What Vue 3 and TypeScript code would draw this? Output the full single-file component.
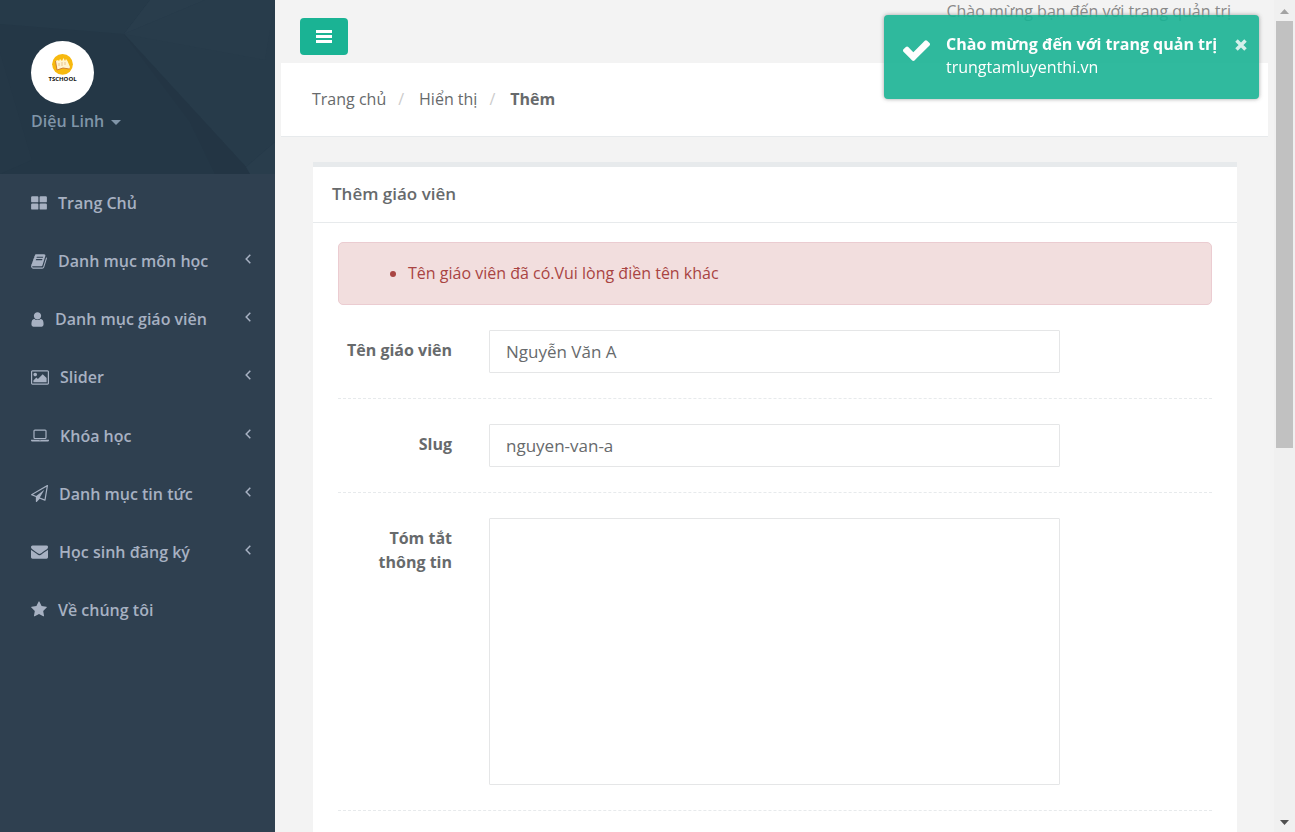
<script setup lang="ts">
import { ref } from 'vue'

interface MenuItem {
  label: string
  viewBox: string
  width: number
  path: string
  expandable: boolean
}

const menu: MenuItem[] = [
  {
    label: 'Trang Chủ',
    viewBox: '0 0 1664 1792',
    width: 16,
    expandable: false,
    path: 'M128 128h544q96 0 96 96v448q0 96-96 96h-544q-128 0-128-96v-448q0-96 128-96zM992 128h544q128 0 128 96v448q0 96-128 96h-544q-96 0-96-96v-448q0-96 96-96zM128 896h544q96 0 96 96v448q0 96-96 96h-544q-128 0-128-96v-448q0-96 128-96zM992 896h544q128 0 128 96v448q0 96-128 96h-544q-96 0-96-96v-448q0-96 96-96z',
  },
  {
    label: 'Danh mục môn học',
    viewBox: '64 0 1664 1792',
    width: 16,
    expandable: true,
    path: 'M1703 478q40 57 18 129l-275 906q-19 64-76.5 107.5t-122.5 43.5h-923q-77 0-148.5-53.5t-99.5-131.5q-24-67-2-127 0-4 3-27t4-37q1-8-3-21.5t-3-19.5q2-11 8-21t16.5-23.5 16.5-23.5q23-38 45-91.5t30-91.5q3-10 .5-30t-.5-28q3-11 17-28t17-23q21-36 42-92t25-90q1-9-2.5-32t.5-28q4-13 22-30.5t22-22.5q19-26 42.5-84.5t27.5-96.5q1-8-3-25.5t-2-26.5q2-8 9-18t18-23 17-21q8-12 16.5-30.5t15-35 16-36 19.5-32 26.5-23.5 36-11.5 47.5 5.5l-1 3q38-9 51-9h761q74 0 114 56t18 130l-274 906q-36 119-71.5 153.5t-128.5 34.5h-869q-27 0-38 15-11 16-1 43 24 70 144 70h923q29 0 56-15.5t35-41.5l300-987q7-22 5-57 38 15 59 43zm-1064 2q-4 13 2 22.5t20 9.5h608q13 0 25.5-9.5t16.5-22.5l21-64q4-13-2-22.5t-20-9.5h-608q-13 0-25.5 9.5t-16.5 22.5zm-83 256q-4 13 2 22.5t20 9.5h608q13 0 25.5-9.5t16.5-22.5l21-64q4-13-2-22.5t-20-9.5h-608q-13 0-25.5 9.5t-16.5 22.5z',
  },
  {
    label: 'Danh mục giáo viên',
    viewBox: '256 0 1280 1792',
    width: 13,
    expandable: true,
    path: 'M1536 1399q0 109-62.5 187t-150.5 78h-854q-88 0-150.5-78t-62.5-187q0-85 8.5-160.5t31.5-152 58.5-131 94-89 134.5-34.5q131 128 313 128t313-128q76 0 134.5 34.5t94 89 58.5 131 31.5 152 8.5 160.5zm-256-887q0 159-112.5 271.5t-271.5 112.5-271.5-112.5-112.5-271.5 112.5-271.5 271.5-112.5 271.5 112.5 112.5 271.5z',
  },
  {
    label: 'Slider',
    viewBox: '-64 0 1920 1792',
    width: 18,
    expandable: true,
    path: 'M576 576q0 80-56 136t-136 56-136-56-56-136 56-136 136-56 136 56 56 136zm1024 384v448h-1408v-192l320-320 160 160 512-512zm96-704h-1600q-13 0-22.5 9.5t-9.5 22.5v1216q0 13 9.5 22.5t22.5 9.5h1600q13 0 22.5-9.5t9.5-22.5v-1216q0-13-9.5-22.5t-22.5-9.5zm160 32v1216q0 66-47 113t-113 47h-1600q-66 0-113-47t-47-113v-1216q0-66 47-113t113-47h1600q66 0 113 47t47 113z',
  },
  {
    label: 'Khóa học',
    viewBox: '0 0 1920 1792',
    width: 18,
    expandable: true,
    path: 'M416 1280q-66 0-113-47t-47-113v-704q0-66 47-113t113-47h1088q66 0 113 47t47 113v704q0 66-47 113t-113 47h-1088zm-32-864v704q0 13 9.5 22.5t22.5 9.5h1088q13 0 22.5-9.5t9.5-22.5v-704q0-13-9.5-22.5t-22.5-9.5h-1088q-13 0-22.5 9.5t-9.5 22.5zm1376 928h160v96q0 40-47 68t-113 28h-1600q-66 0-113-28t-47-68v-96h1760zm-720 96q16 0 16-16t-16-16h-160q-16 0-16 16t16 16h160z',
  },
  {
    label: 'Danh mục tin tức',
    viewBox: '0 0 1792 1792',
    width: 17,
    expandable: true,
    path: 'M1764 11q33 24 27 64l-256 1536q-5 29-32 45-14 8-31 8-11 0-24-5l-527-215-298 327q-18 21-47 21-14 0-23-4-19-7-30-23.5t-11-36.5v-452l-472-193q-37-14-40-55-3-39 32-59l1664-960q35-21 68 2zm-342 1499l221-1323-1434 827 336 137 863-639-478 797z',
  },
  {
    label: 'Học sinh đăng ký',
    viewBox: '0 0 1792 1792',
    width: 17,
    expandable: true,
    path: 'M1792 710v794q0 66-47 113t-113 47h-1472q-66 0-113-47t-47-113v-794q44 49 101 87 362 246 497 345 57 42 92.5 65.5t94.5 48 110 24.5h2q51 0 110-24.5t94.5-48 92.5-65.5q170-123 498-345 57-39 100-87zm0-294q0 79-49 151t-122 123q-376 261-468 325-10 7-42.5 31t-54 38.5-52 32.5-57.5 27-50 9h-2q-23 0-50-9t-57.5-27-52-32.5-54-38.5-42.5-31q-91-64-262-182.5t-205-142.5q-62-42-117-115.5t-55-136.5q0-78 41.5-130t118.5-52h1472q65 0 112.5 47t47.5 113z',
  },
  {
    label: 'Về chúng tôi',
    viewBox: '64 0 1664 1792',
    width: 16,
    expandable: false,
    path: 'M1728 647q0 22-26 48l-363 354 86 500q1 7 1 20 0 21-10.5 35.5t-30.5 14.5q-19 0-40-12l-449-236-449 236q-22 12-40 12-21 0-31.5-14.5t-10.5-35.5q0-6 2-20l86-500-364-354q-25-27-25-48 0-37 56-46l502-73 225-455q19-41 49-41t49 41l225 455 502 73q56 9 56 46z',
  },
]

const teacherName = ref('Nguyễn Văn A')
const slug = ref('nguyen-van-a')
const summary = ref('')
const toastVisible = ref(true)
</script>

<template>
  <div class="layout">
    <nav class="sidebar" aria-label="Menu">
      <div class="profile">
        <svg class="facets" viewBox="0 0 275 174" preserveAspectRatio="none" aria-hidden="true">
          <rect width="275" height="174" fill="#243746" />
          <path d="M0 0H150L124 34L0 24Z" fill="#263a49" />
          <path d="M150 0H275V142L246 167L124 34Z" fill="#273b4a" />
          <path d="M150 0H205L124 34Z" fill="#293d4c" />
          <path d="M124 34L265 60L275 0H205Z" fill="#283c4b" />
          <path d="M124 34L246 167L250 174H215L190 122Z" fill="#233544" />
          <path d="M0 52L32 160L0 174Z" fill="#253847" />
          <path d="M275 142V174H250L246 167Z" fill="#293d4c" />
        </svg>
        <svg class="avatar" viewBox="0 0 63 63" role="img" aria-label="TSCHOOL">
          <circle cx="31.500" cy="31.500" r="31.500" fill="#fff" />
          <circle cx="31.500" cy="23.300" r="10.400" fill="#f7b90f" />
          <path d="M24.500 20L27 19L28 20L29 18L31 20L32.500 17L34 20L35 18L36.500 20L39 26L38 28L32 27L26 29Z" fill="#fff3cf" />
          <path d="M24.500 20L26 29L32 27L38.500 28" fill="none" stroke="#c9742c" stroke-width="0.9" />
          <path d="M28 22V25M31 21V25M34 21V24" fill="none" stroke="#dfb071" stroke-width="0.7" />
          <text x="31.500" y="40" text-anchor="middle" class="avatar-text">TSCHOOL</text>
        </svg>
        <button type="button" class="user">Diệu Linh<span class="caret"></span></button>
      </div>
      <ul class="menu">
        <li v-for="item in menu" :key="item.label">
          <a href="#">
            <svg class="menu-icon" :viewBox="item.viewBox" :width="item.width" height="17" aria-hidden="true">
              <path :d="item.path" />
            </svg>
            <span class="menu-label">{{ item.label }}</span>
            <svg v-if="item.expandable" class="arrow" viewBox="0 0 6 10" width="6" height="10" aria-hidden="true">
              <path d="M5.300 0.800L1.200 5L5.300 9.200" />
            </svg>
          </a>
        </li>
      </ul>
    </nav>

    <main class="page">
      <header class="topbar">
        <button type="button" class="toggle" aria-label="Thu gọn menu">
          <svg viewBox="0 0 16 13" width="16" height="13" aria-hidden="true">
            <path d="M0 0H16V3H0ZM0 5H16V8H0ZM0 10H16V13H0Z" />
          </svg>
        </button>
        <span class="welcome">Chào mừng bạn đến với trang quản trị</span>
      </header>

      <nav class="heading" aria-label="Breadcrumb">
        <ol class="breadcrumb">
          <li><a href="#">Trang chủ</a></li>
          <li><a href="#">Hiển thị</a></li>
          <li><strong>Thêm</strong></li>
        </ol>
      </nav>

      <section class="box">
        <h5 class="box-title">Thêm giáo viên</h5>
        <div class="box-content">
          <div class="alert" role="alert">
            <ul>
              <li>Tên giáo viên đã có.Vui lòng điền tên khác</li>
            </ul>
          </div>
          <form @submit.prevent>
            <div class="row">
              <label for="teacher-name">Tên giáo viên</label>
              <div class="field"><input id="teacher-name" v-model="teacherName" type="text" /></div>
            </div>
            <div class="row">
              <label for="slug">Slug</label>
              <div class="field"><input id="slug" v-model="slug" type="text" /></div>
            </div>
            <div class="row">
              <label for="summary">Tóm tắt thông tin</label>
              <div class="field"><textarea id="summary" v-model="summary"></textarea></div>
            </div>
          </form>
        </div>
      </section>
    </main>

    <div class="scrollbar" aria-hidden="true">
      <svg class="scroll-arrow" viewBox="0 0 9 5" width="9" height="5"><path d="M0 5L4.500 0L9 5Z" fill="#a3a3a3" /></svg>
      <div class="track"><div class="thumb"></div></div>
      <svg class="scroll-arrow" viewBox="0 0 9 5" width="9" height="5"><path d="M0 0L4.500 5L9 0Z" fill="#505050" /></svg>
    </div>

    <div v-if="toastVisible" class="toast" role="status">
      <svg class="check" viewBox="121 270 1550 1252" width="27" height="22" aria-hidden="true">
        <path d="M1671 566q0 40-28 68l-724 724-136 136q-28 28-68 28t-68-28l-136-136-362-362q-28-28-28-68t28-68l136-136q28-28 68-28t68 28l294 295 656-657q28-28 68-28t68 28l136 136q28 28 28 68z" />
      </svg>
      <div class="toast-text">
        <div class="toast-title">Chào mừng đến với trang quản trị</div>
        <div>trungtamluyenthi.vn</div>
      </div>
      <button type="button" class="close" aria-label="Đóng" @click="toastVisible = false">
        <svg viewBox="0 0 12 12" width="12" height="12" aria-hidden="true">
          <path d="M1.500 1.500L10.500 10.500M10.500 1.500L1.500 10.500" />
        </svg>
      </button>
    </div>
  </div>
</template>

<style>
html,
body {
  margin: 0;
  overflow: hidden;
}
</style>

<style scoped>
* {
  box-sizing: border-box;
}

.layout {
  display: grid;
  grid-template-columns: 275px 1fr 21px;
  height: 100vh;
  overflow: hidden;
  background: #f3f3f3;
  color: #676a6c;
  font-family: 'Open Sans', 'Noto Sans', sans-serif;
  font-size: 16px;
  line-height: 24px;
}

a {
  color: inherit;
  text-decoration: none;
}

button {
  font: inherit;
  border: 0;
  padding: 0;
  cursor: pointer;
}

ul,
ol {
  list-style: none;
  margin: 0;
  padding: 0;
}

.sidebar {
  background: #2f4050;
}

.profile {
  position: relative;
  display: flex;
  flex-direction: column;
  align-items: flex-start;
  height: 174px;
  padding: 41px 31px 0;
}

.facets {
  position: absolute;
  inset: 0;
  width: 100%;
  height: 100%;
}

.avatar {
  position: relative;
  width: 63px;
  height: 63px;
}

.avatar-text {
  font-size: 6px;
  font-weight: 700;
  fill: #111;
}

.user {
  position: relative;
  display: flex;
  align-items: center;
  gap: 7px;
  margin-top: 5px;
  background: none;
  color: #8095a8;
  font-weight: 600;
}

.caret {
  margin-top: 3px;
  border: 5px solid transparent;
  border-top-color: #8095a8;
  border-bottom: 0;
}

.menu {
  display: grid;
  grid-auto-rows: 1fr;
  height: 465px;
}

.menu a {
  display: flex;
  align-items: center;
  height: 100%;
  padding: 0 24px 0 31px;
  color: #a7b1c2;
  font-weight: 600;
}

.menu-icon {
  flex: none;
  margin-right: 11px;
  fill: currentColor;
}

.menu-label {
  flex: 1;
}

.arrow {
  margin-bottom: 4px;
  fill: none;
  stroke: currentColor;
  stroke-width: 1.5;
}

.page {
  min-width: 0;
  overflow: hidden;
}

.topbar {
  display: flex;
  justify-content: space-between;
  align-items: flex-start;
  height: 63px;
  padding: 0 43px 0 25px;
}

.toggle {
  display: flex;
  align-items: center;
  justify-content: center;
  width: 48px;
  height: 37px;
  margin-top: 18px;
  border-radius: 4px;
  background: #1ab394;
}

.toggle svg {
  fill: #fff;
}

.welcome {
  color: #888;
  line-height: 22px;
}

.heading {
  margin: 0 6px;
  padding: 24px 31px 25px;
  background: #fff;
  border-bottom: 1px solid #e7eaec;
}

.breadcrumb {
  display: flex;
}

.breadcrumb li + li::before {
  content: '/';
  padding: 0 15px 0 12px;
  color: #ccc;
}

.box {
  margin: 25px 37px 0 38px;
  background: #fff;
  border-top: 5px solid #e7eaec;
}

.box-title {
  margin: 0;
  padding: 15px 19px 16px;
  border-bottom: 1px solid #e7eaec;
  font-size: 17px;
  font-weight: 600;
  line-height: 24px;
}

.box-content {
  padding: 19px 25px 25px;
}

.alert {
  margin-bottom: 25px;
  padding: 19px;
  border: 1px solid #ebccd1;
  border-radius: 5px;
  background: #f2dede;
  color: #a94442;
  line-height: 23px;
}

.alert ul {
  padding-left: 50px;
  list-style: disc;
}

.row {
  display: grid;
  grid-template-columns: 2fr 8fr 2fr;
  margin: 0 -19px;
  position: relative;
  padding-bottom: 51px;
}

.row::after {
  content: '';
  position: absolute;
  left: 19px;
  right: 19px;
  bottom: 25px;
  border-top: 1px dashed #e7eaec;
}

.row label {
  padding: 8px 19px 0 24px;
  font-weight: 700;
  text-align: right;
}

.field {
  display: flex;
  padding: 0 19px 0 18px;
}

input,
textarea {
  width: 100%;
  height: 43px;
  margin: 0;
  padding: 8px 16px;
  border: 1px solid #e5e6e7;
  border-radius: 1px;
  outline: 0;
  background: #fff;
  color: inherit;
  font: inherit;
  font-size: 17px;
  resize: none;
}

textarea {
  height: 267px;
}

.scrollbar {
  display: flex;
  flex-direction: column;
  align-items: center;
  background: #f0f0f0;
}

.scroll-arrow {
  flex: none;
  margin: 9px 0 7px;
}

.track {
  flex: 1;
  width: 17px;
}

.thumb {
  height: 54%;
  background: #c1c1c1;
}

.toast {
  position: fixed;
  top: 15px;
  right: 36px;
  display: flex;
  width: 375px;
  height: 84px;
  padding: 18px 12px 0 19px;
  border-radius: 4px;
  background: #1ab394;
  box-shadow: 0 0 4px #999;
  color: #fff;
  line-height: 23px;
  opacity: 0.9;
}

.check {
  flex: none;
  margin: 6px 16px 0 0;
  fill: #fff;
}

.toast-text {
  flex: 1;
  white-space: nowrap;
}

.toast-title {
  font-weight: 700;
}

.close {
  display: flex;
  width: 12px;
  height: 12px;
  margin-top: 6px;
  background: none;
}

.close path {
  fill: none;
  stroke: #fff;
  stroke-width: 3.5;
  opacity: 0.8;
}
</style>
